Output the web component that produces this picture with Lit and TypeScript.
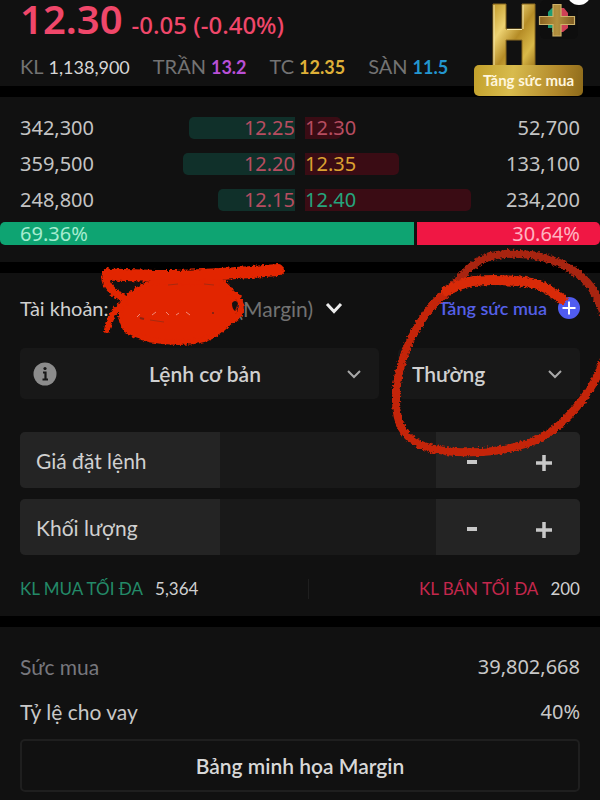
import { LitElement, html, svg, css } from "lit";
import { customElement, state } from "lit/decorators.js";
import { styleMap } from "lit/directives/style-map.js";

type Tone = "down" | "flat" | "up";
type Point = [number, number];

interface Level {
  bidVolume: string;
  bid: string;
  bidDepth: number;
  ask: string;
  askTone: Tone;
  askDepth: number;
  askVolume: string;
}

const LEVELS: Level[] = [
  { bidVolume: "342,300", bid: "12.25", bidDepth: 59, ask: "12.30", askTone: "down", askDepth: 20, askVolume: "52,700" },
  { bidVolume: "359,500", bid: "12.20", bidDepth: 62, ask: "12.35", askTone: "flat", askDepth: 52, askVolume: "133,100" },
  { bidVolume: "248,800", bid: "12.15", bidDepth: 43, ask: "12.40", askTone: "up", askDepth: 92, askVolume: "234,200" },
];

const BUY_SHARE = 69.36;
const SELL_SHARE = 30.64;

/* Curve through the given points, bending at the middle of each segment. */
const curve = (pts: Point[]) => {
  let d = `M${pts[0][0]} ${pts[0][1]}`;
  for (let i = 1; i < pts.length - 1; i++) {
    const [x, y] = pts[i];
    const [nx, ny] = pts[i + 1];
    d += ` Q${x} ${y} ${(x + nx) / 2} ${(y + ny) / 2}`;
  }
  const [lx, ly] = pts[pts.length - 1];
  return `${d} L${lx} ${ly}`;
};

const RING_OUTER: Point[] = [[443, 297], [460, 276], [483, 257], [510, 253], [543, 256], [573, 269], [593, 287], [604, 315]];
const RING_INNER: Point[] = [
  [606, 352], [600, 374], [578, 407], [547, 437], [510, 449], [477, 453], [437, 451], [408, 440], [396, 417],
  [396, 383], [406, 347], [426, 312], [447, 290], [477, 280], [510, 280],
];
const RING_END: Point[] = [[446, 291], [460, 284], [477, 280], [510, 280], [541, 284], [562, 299]];

const chevron = (strong = false) => html`
  <svg class="chevron" viewBox="0 0 18 12" width="18" height="12" aria-hidden="true">
    <path d=${strong ? "M2 2 L9 9.5 L16 2" : "M3 3 L9 9 L15 3"} fill="none" stroke="currentColor" stroke-width=${strong ? 3 : 2} />
  </svg>`;

@customElement("quote-header")
export class QuoteHeader extends LitElement {
  static styles = css`
    :host { display: block; position: relative; padding: 0 20px; height: 86px; box-sizing: border-box; }
    .price { display: flex; align-items: baseline; gap: 9px; height: 40px; color: #f0476a; font-family: "Noto Sans", sans-serif; line-height: 38px; }
    .last { font-size: 40px; font-weight: 600; }
    .change { font-size: 24px; font-weight: 500; }
    .stats { display: flex; gap: 23px; margin: 13px 0 0; line-height: 26px; }
    .stat { display: flex; align-items: baseline; gap: 5px; }
    dt { color: #737373; font-size: 20px; }
    dd { margin: 0; font-size: 18px; font-weight: 700; }
    .volume { color: #d6d6d6; font-weight: 400; }
    .ceiling { color: #b94fd6; }
    .ref { color: #deb038; }
    .floor { color: #2396cf; }
    .promo { position: absolute; top: 0; right: 16px; width: 112px; height: 96px; padding: 0; border: 0; background: none; font: inherit; }
    .promo svg { position: absolute; top: 0; left: 0; overflow: visible; }
    .tag {
      position: absolute; left: 2px; right: 1px; top: 65px; height: 31px; line-height: 31px; border-radius: 5px;
      background: linear-gradient(100deg, #c2a02b, #d8bb4d 35%, #b2892b 75%, #8d6a1a);
      color: #fff6dc; font-size: 15px; font-weight: 700; text-align: center; white-space: nowrap;
    }
  `;

  render() {
    return html`
      <div class="price"><span class="last">12.30</span><span class="change">-0.05 (-0.40%)</span></div>
      <dl class="stats">
        <div class="stat"><dt>KL</dt><dd class="volume">1,138,900</dd></div>
        <div class="stat"><dt>TRẦN</dt><dd class="ceiling">13.2</dd></div>
        <div class="stat"><dt>TC</dt><dd class="ref">12.35</dd></div>
        <div class="stat"><dt>SÀN</dt><dd class="floor">11.5</dd></div>
      </dl>
      <button class="promo" type="button">
        <svg viewBox="0 0 112 66" width="112" height="66" aria-hidden="true">
          <defs>
            <linearGradient id="gold" x1="0" y1="0" x2="1" y2="1">
              <stop offset="0" stop-color="#c29a28" />
              <stop offset="0.3" stop-color="#edd272" />
              <stop offset="0.55" stop-color="#b58c26" />
              <stop offset="0.8" stop-color="#dab949" />
              <stop offset="1" stop-color="#a37b1e" />
            </linearGradient>
            <linearGradient id="bronze" x1="0" y1="0" x2="1" y2="0">
              <stop offset="0" stop-color="#8a6220" />
              <stop offset="0.5" stop-color="#b3913f" />
              <stop offset="1" stop-color="#7d5a22" />
            </linearGradient>
          </defs>
          <rect x="68" y="0" width="38" height="39" rx="5" fill="#0e0e0e" />
          <path d="M85 8 V32 H80 V28 H76 V23 L73 20 L76 17 V12 L80 8 Z" fill="#1d9b73" />
          <path d="M85 8 H92 L96 13 V17 L99 20 L96 24 V28 L91 32 H85 Z" fill="#cf4056" />
          <path d="M21 4 H34 V29 H50 V4 H63 V66 H50 V40 H34 V66 H21 Z" fill="url(#gold)" stroke="#8b6a20" stroke-width="1" />
          <path d="M22 5 V66 M35 29.500 H50 M51 5 V29" fill="none" stroke="#f6e8ae" stroke-width="1" />
          <path d="M81 4.500 H89 V16.500 H102.500 V24.500 H89 V36 H81 V24.500 H67.500 V16.500 H81 Z" fill="url(#bronze)" stroke="#cdb269" stroke-width="1.200" />
          <circle cx="107" cy="-7" r="12" fill="#fff" />
        </svg>
        <span class="tag">Tăng sức mua</span>
      </button>
    `;
  }
}

@customElement("order-book")
export class OrderBook extends LitElement {
  static styles = css`
    :host { display: block; padding: 13px 0 17px; font-family: "Noto Sans", sans-serif; font-size: 20px; }
    table { width: 100%; table-layout: fixed; border-collapse: collapse; color: #c4c4c4; }
    tr { height: 36px; }
    td { padding: 0; line-height: 22px; }
    .volume { width: 20%; }
    .buy { padding-left: 20px; }
    .sell { padding-right: 20px; text-align: right; }
    .level { position: relative; height: 22px; padding: 0 5px; }
    .bid { text-align: right; color: #b74d60; }
    .depth { position: absolute; top: 0; bottom: 0; }
    .bid .depth { right: 5px; background: #10302a; border-radius: 5px 0 0 5px; }
    .ask .depth { left: 5px; background: #3a0c14; border-radius: 0 5px 5px 0; }
    .value { position: relative; }
    .down { color: #b74d60; }
    .flat { color: #dca231; }
    .up { color: #25a57d; }
    .ratio { display: grid; gap: 3px; margin-top: 4px; line-height: 23px; }
    .share { height: 23px; padding: 0 20px; }
    .buyers { background: #0ea472; color: #a5ecd0; border-radius: 5px 0 0 5px; }
    .sellers { background: #f01744; color: #ffb4c2; border-radius: 0 5px 5px 0; text-align: right; }
  `;

  render() {
    return html`
      <table>
        <colgroup><col class="volume" /><col /><col /><col class="volume" /></colgroup>
        <tbody>
          ${LEVELS.map((l) => html`
            <tr>
              <td class="buy">${l.bidVolume}</td>
              <td><div class="level bid">
                <span class="depth" style=${styleMap({ width: `${l.bidDepth}%` })}></span><span class="value">${l.bid}</span>
              </div></td>
              <td><div class="level ask">
                <span class="depth" style=${styleMap({ width: `${l.askDepth}%` })}></span><span class="value ${l.askTone}">${l.ask}</span>
              </div></td>
              <td class="sell">${l.askVolume}</td>
            </tr>`)}
        </tbody>
      </table>
      <div class="ratio" style=${styleMap({ gridTemplateColumns: `${BUY_SHARE}fr ${SELL_SHARE}fr` })}>
        <div class="share buyers">${BUY_SHARE}%</div>
        <div class="share sellers">${SELL_SHARE}%</div>
      </div>
    `;
  }
}

@customElement("order-form")
export class OrderForm extends LitElement {
  static styles = css`
    :host { display: block; position: relative; padding: 17px 20px 16px; font-size: 21px; color: #d0d0d0; }
    select, button, input { font: inherit; color: inherit; background: none; border: 0; padding: 0; margin: 0; }
    select { appearance: none; outline: none; }
    option { background: #181818; color: #d0d0d0; }
    .account { display: flex; align-items: center; height: 36px; font-size: 20px; }
    .hidden { width: 129px; flex: none; }
    .picker { position: relative; display: flex; align-items: center; }
    .picker select { width: 105px; color: #727272; font-size: 21px; }
    .picker .chevron { position: absolute; right: 0; color: #ececec; pointer-events: none; }
    .boost { display: flex; align-items: center; gap: 11px; margin-left: auto; color: #5560e8; font-size: 18px; font-weight: 600; }
    .types { display: grid; grid-template-columns: 359fr 182fr; gap: 19px; margin-top: 22px; }
    .type { position: relative; display: flex; align-items: center; height: 51px; background: #181818; border-radius: 5px; font-weight: 600; }
    .type select { width: 100%; height: 100%; padding: 0 14px; }
    .type.basic select { padding: 0 36px 0 47px; text-align: center; text-align-last: center; }
    .type .chevron { position: absolute; right: 16px; pointer-events: none; color: #a8a8a8; }
    .info { position: absolute; left: 13px; }
    .fields { display: grid; gap: 11px; margin-top: 33px; }
    .field { display: grid; grid-template-columns: 200fr 216fr 144fr; height: 56px; border-radius: 5px; overflow: hidden; background: #191919; }
    .field label { display: flex; align-items: center; padding-left: 16px; background: #242424; }
    .field input { min-width: 0; padding: 0 16px; outline: none; }
    .steps { display: grid; grid-template-columns: 1fr 1fr; background: #242424; }
    .steps button { display: flex; align-items: center; justify-content: center; padding-top: 4px; }
    .limits { display: flex; justify-content: space-between; align-items: center; margin-top: 23px; font-size: 17px; line-height: 22px; }
    .limit { display: flex; gap: 12px; }
    .rule { width: 1px; height: 20px; background: #1f1f1f; }
    .max-buy { color: #238a68; }
    .max-sell { color: #c4274c; }
    .ink { position: absolute; pointer-events: none; overflow: visible; }
    .scribble { left: 100px; top: -12px; }
    .ring { right: 0; top: -28px; }
  `;

  @state() private price = "";
  @state() private quantity = "";

  private stepper(id: string, label: string, value: string, set: (v: string) => void) {
    const move = (by: number) => set(String(Math.max(0, (Number(value) || 0) + by)));
    return html`
      <div class="field">
        <label for=${id}>${label}</label>
        <input id=${id} type="text" inputmode="decimal" .value=${value}
          @input=${(e: Event) => set((e.target as HTMLInputElement).value)} />
        <div class="steps">
          <button type="button" aria-label="Giảm" @click=${() => move(-1)}>
            <svg viewBox="0 0 18 18" width="18" height="18"><path d="M4 9 H14" stroke="#c8c8c8" stroke-width="4" /></svg>
          </button>
          <button type="button" aria-label="Tăng" @click=${() => move(1)}>
            <svg viewBox="0 0 18 18" width="18" height="18"><path d="M1 10 H17 M9 2 V18" stroke="#c8c8c8" stroke-width="3.500" /></svg>
          </button>
        </div>
      </div>`;
  }

  render() {
    return html`
      <div class="account">
        <label for="account">Tài khoản:</label>
        <span class="hidden"></span>
        <span class="picker">
          <select id="account"><option>(Margin)</option></select>
          ${chevron(true)}
        </span>
        <button class="boost" type="button">
          Tăng sức mua
          <svg viewBox="0 0 22 22" width="22" height="22" aria-hidden="true">
            <circle cx="11" cy="11" r="11" fill="#505cf0" />
            <path d="M4.500 11 H17.500 M11 4.500 V17.500" stroke="#fff" stroke-width="2" />
          </svg>
        </button>
      </div>
      <div class="types">
        <div class="type basic">
          <svg class="info" viewBox="0 0 24 24" width="24" height="24" aria-hidden="true">
            <circle cx="12" cy="12" r="11.500" fill="#8c8c8c" />
            <path d="M10 10.500 H12.500 V17 M9.500 17.500 H15" fill="none" stroke="#181818" stroke-width="2.200" />
            <circle cx="12" cy="6.500" r="1.600" fill="#181818" />
          </svg>
          <select aria-label="Loại lệnh"><option>Lệnh cơ bản</option></select>
          ${chevron()}
        </div>
        <div class="type">
          <select aria-label="Hình thức"><option>Thường</option></select>
          ${chevron()}
        </div>
      </div>
      <div class="fields">
        ${this.stepper("price", "Giá đặt lệnh", this.price, (v) => (this.price = v))}
        ${this.stepper("quantity", "Khối lượng", this.quantity, (v) => (this.quantity = v))}
      </div>
      <div class="limits">
        <div class="limit"><span class="max-buy">KL MUA TỐI ĐA</span><span>5,364</span></div>
        <span class="rule"></span>
        <div class="limit"><span class="max-sell">KL BÁN TỐI ĐA</span><span>200</span></div>
      </div>
      ${this.ink()}
    `;
  }

  /* Hand-drawn marker strokes, roughened at the edges like chalk. */
  private ink() {
    const rough = (id: string) => svg`
      <filter id=${id} x="-10%" y="-10%" width="120%" height="120%" color-interpolation-filters="sRGB">
        <feTurbulence type="fractalNoise" baseFrequency="0.4" numOctaves="2" seed="4" />
        <feDisplacementMap in="SourceGraphic" scale="5" xChannelSelector="R" yChannelSelector="G" />
      </filter>`;
    return html`
      <svg class="ink scribble" viewBox="100 261 190 90" width="190" height="90" aria-hidden="true">
        ${rough("rough-a")}
        <g filter="url(#rough-a)" fill="none" stroke="#e22500" stroke-linecap="round" stroke-linejoin="round">
          <path d="M278 270 C240 273 200 276 160 276 C140 276 120 274 109 275" stroke-width="12" />
          <path d="M107 272 C101 282 113 294 127 300" stroke-width="8" />
          <path d="M126 298 C138 288 146 284 158 282 H222 C230 286 231 292 233 296 C236 304 234 316 230 322 C220 332 212 340 190 342 C160 344 136 338 126 330 C119 320 118 306 126 298 Z" fill="#e22500" stroke-width="5" />
          <path d="M107 330 C109 320 114 308 125 303" stroke-width="6" />
          <path d="M230 292 C242 296 245 312 234 320" stroke-width="6" />
        </g>
        <path d="M137 317 l3 -3 M152 315 l4 -3 M166 312 l3 3 M176 315 l3 -2 M186 312 l4 3" stroke="#f08a78" stroke-width="1" />
        <path d="M140 318 l4 1 M212 313 l2 0" stroke="#8a2412" stroke-width="2" />
        <path d="M150 320 l14 2 M168 285 l10 -1 M204 284 l10 1" stroke="#a82a10" stroke-width="1" />
        <path d="M232 303 q3 -4 6 0 l-3 8 q-3 -2 -3 -8 Z" fill="#151111" />
      </svg>
      <svg class="ink ring" viewBox="385 245 215 220" width="215" height="220" aria-hidden="true">
        ${rough("rough-b")}
        <g filter="url(#rough-b)" fill="none" stroke-linecap="round">
          <path d=${curve(RING_OUTER)} stroke="#a82410" stroke-width="8" />
          <path d=${curve(RING_INNER)} stroke="#c42409" stroke-width="8" />
          <path d=${curve(RING_END)} stroke="#d92a08" stroke-width="10" />
        </g>
      </svg>`;
  }
}

@customElement("margin-summary")
export class MarginSummary extends LitElement {
  static styles = css`
    :host { display: block; padding: 17px 20px 8px; font-size: 21px; color: #c8c8c8; }
    dl { margin: 0; }
    .row { display: flex; justify-content: space-between; align-items: center; height: 45px; }
    dd { margin: 0; font-family: "Noto Sans", sans-serif; font-size: 20px; }
    .muted { color: #77777d; }
    button {
      width: 100%; height: 53px; margin-top: 5px; padding: 0; border: 2px solid #1f1f1f; border-radius: 5px;
      background: none; color: #d8d8d8; font: inherit; font-weight: 600;
    }
  `;

  render() {
    return html`
      <dl>
        <div class="row"><dt class="muted">Sức mua</dt><dd>39,802,668</dd></div>
        <div class="row"><dt>Tỷ lệ cho vay</dt><dd>40%</dd></div>
      </dl>
      <button type="button">Bảng minh họa Margin</button>
    `;
  }
}

@customElement("app-root")
export class AppRoot extends LitElement {
  static styles = css`
    :host { display: flex; flex-direction: column; gap: 11px; min-height: 100vh; background: #000; font-family: Lato, "Noto Sans", sans-serif; overflow-x: clip; }
    .panel { background: #111; }
    .panel:last-child { flex: 1; }
    .front { position: relative; z-index: 1; }
  `;

  render() {
    return html`
      <quote-header class="panel front"></quote-header>
      <order-book class="panel"></order-book>
      <order-form class="panel front"></order-form>
      <margin-summary class="panel"></margin-summary>
    `;
  }
}
